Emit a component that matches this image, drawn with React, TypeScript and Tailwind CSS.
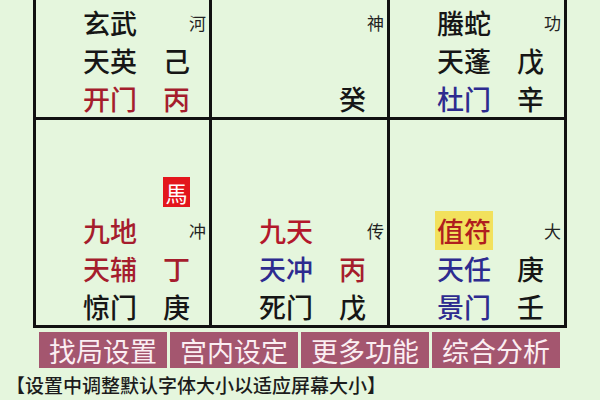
const FONT = { fontFamily: '"Noto Sans CJK SC", "Noto Sans", sans-serif' };

type Row = {
  name?: string;
  nameColor?: string;
  highlight?: boolean;
  stem?: string;
  stemColor?: string;
  small?: string;
  horse?: boolean;
};

const BLACK = "text-[#161616]";
const RED = "text-[#a51d2d]";
const BLUE = "text-[#2d2b8f]";

const Cell = ({ rows, tall }: { rows: Row[]; tall?: boolean }) => (
  <div
    className={`flex flex-col justify-end border-r-[3px] border-b-[3px] border-[#111] pl-[47px] ${
      tall ? "h-[208px]" : "h-[120px]"
    }`}
  >
    {rows.map((r, i) => (
      <div key={i} className="flex h-[38px] items-center">
        <div className={`w-[80px] text-[27px] font-medium leading-none ${r.nameColor ?? BLACK}`}>
          {r.name &&
            (r.highlight ? (
              <span className="-ml-[2px] inline-block bg-[#f2e15c] px-[2px] py-[6px]">{r.name}</span>
            ) : (
              r.name
            ))}
        </div>
        <div className={`w-[29px] text-[27px] font-medium leading-none ${r.stemColor ?? BLACK}`}>
          {r.horse ? (
            <span className="flex h-[30px] w-[27px] items-center justify-center bg-[#e3161c] text-[22px] font-normal text-white">
              馬
            </span>
          ) : (
            r.stem
          )}
        </div>
        <div className="flex-1 pr-[3px] text-right text-[17px] leading-none text-[#222]">{r.small}</div>
      </div>
    ))}
  </div>
);

const buttons = ["找局设置", "宫内设定", "更多功能", "综合分析"];

export default function App() {
  return (
    <div className="h-[400px] w-[600px] overflow-hidden bg-[#e5f6dd]" style={FONT}>
      <div className="ml-[33px] grid w-[534px] grid-cols-[176px_178px_177px] border-l-[3px] border-[#111]">
        <Cell
          rows={[
            { name: "玄武", small: "河" },
            { name: "天英", stem: "己" },
            { name: "开门", nameColor: RED, stem: "丙", stemColor: RED },
          ]}
        />
        <Cell rows={[{ small: "神" }, {}, { stem: "癸" }]} />
        <Cell
          rows={[
            { name: "螣蛇", small: "功" },
            { name: "天蓬", stem: "戊" },
            { name: "杜门", nameColor: BLUE, stem: "辛" },
          ]}
        />
        <Cell
          tall
          rows={[
            { horse: true },
            { name: "九地", nameColor: RED, small: "冲" },
            { name: "天辅", nameColor: RED, stem: "丁", stemColor: RED },
            { name: "惊门", stem: "庚" },
          ]}
        />
        <Cell
          tall
          rows={[
            { name: "九天", nameColor: "text-[#b3182b]", small: "传" },
            { name: "天冲", nameColor: BLUE, stem: "丙", stemColor: RED },
            { name: "死门", stem: "戊" },
          ]}
        />
        <Cell
          tall
          rows={[
            { name: "值符", nameColor: "text-[#b01e1e]", highlight: true, small: "大" },
            { name: "天任", nameColor: BLUE, stem: "庚" },
            { name: "景门", nameColor: BLUE, stem: "壬" },
          ]}
        />
      </div>

      <div className="mt-[4px] ml-[39px] flex gap-[3px]">
        {buttons.map((b) => (
          <div
            key={b}
            className="flex h-[36px] w-[128px] items-center justify-center bg-[#a4566f] text-[27px] leading-none text-[#fbeef2]"
          >
            {b}
          </div>
        ))}
      </div>

      <div className="mt-[2px] flex h-[28px] items-center pl-[6px] text-[19px] font-medium leading-none text-[#1c1c1c]">
        【设置中调整默认字体大小以适应屏幕大小】
      </div>
    </div>
  );
}
